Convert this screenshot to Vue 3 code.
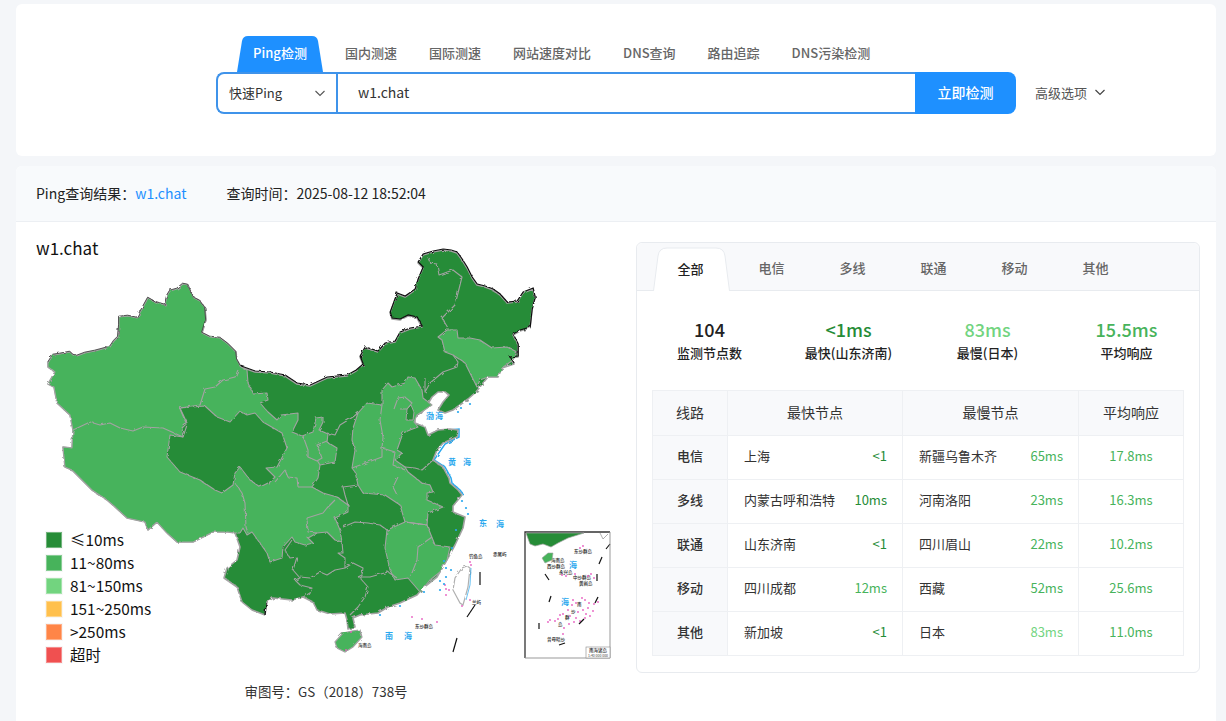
<template>
  <div class="page">
    <section class="search-card">
      <div class="nav-tabs">
        <div class="nav-tab active">
          <svg class="tab-shape" width="86" height="36" viewBox="0 0 86 36">
            <path d="M0 36 L5 5 Q6 0 11 0 H75 Q80 0 81 5 L86 36 Z" fill="#1e90ff" />
          </svg>
          <span>Ping检测</span>
        </div>
        <div v-for="tab in navTabs" :key="tab" class="nav-tab">{{ tab }}</div>
      </div>
      <div class="search-row">
        <div class="search-box">
          <div class="fields">
            <div class="select">
              <span>快速Ping</span>
              <svg width="12" height="12" viewBox="0 0 12 12"><path d="M1.5 4 L6 8.5 L10.5 4" fill="none" stroke="#555" stroke-width="1.1" /></svg>
            </div>
            <div class="host">w1.chat</div>
          </div>
          <button class="go">立即检测</button>
        </div>
        <div class="advanced">
          <span>高级选项</span>
          <svg width="12" height="12" viewBox="0 0 12 12"><path d="M1.5 4 L6 8.5 L10.5 4" fill="none" stroke="#444" stroke-width="1.2" /></svg>
        </div>
      </div>
    </section>

    <section class="result-card">
      <div class="result-head">
        <span>Ping查询结果：<a class="host-link">w1.chat</a></span>
        <span>查询时间：2025-08-12 18:52:04</span>
      </div>
      <div class="result-body">
        <div class="map-side">
          <div class="map-wrap">
            <h3 class="map-title">w1.chat</h3>
            <svg class="map" width="600" height="430" viewBox="36 242 600 430">
              <defs>
                <filter id="rough" x="-2%" y="-2%" width="104%" height="104%">
                  <feTurbulence type="fractalNoise" baseFrequency="0.22" numOctaves="2" seed="4" result="n" />
                  <feDisplacementMap in="SourceGraphic" in2="n" scale="3" />
                </filter>
              </defs>
              <g filter="url(#rough)">
                <!-- 海岸线 -->
                <polyline :points="coast" fill="none" stroke="#2aa8ee" stroke-width="1.5" />
                <polygon :points="outline" fill="#268c37" stroke="#a3a3a3" stroke-width="1.6" stroke-linejoin="round" />
                <polygon v-for="(p, i) in lightAreas" :key="'l' + i" :points="p" fill="#47b35b" stroke="#a3a3a3" stroke-width="1.1" stroke-linejoin="round" />
                <polygon :points="qinghai" fill="#268c37" stroke="#a3a3a3" stroke-width="1.1" stroke-linejoin="round" />
                <polygon :points="tianjin" fill="#268c37" stroke="#a3a3a3" stroke-width="1" />
                <polyline v-for="(p, i) in borders" :key="'b' + i" :points="p" fill="none" stroke="#a3a3a3" stroke-width="1.1" stroke-linejoin="round" />
                <polyline :points="frontierWest" fill="none" stroke="#444" stroke-width="0.9" transform="translate(-0.4 -0.8)" />
                <polyline :points="frontierNorth" fill="none" stroke="#111" stroke-width="1.2" transform="translate(0.2 -1)" />
                <polyline points="266,603 265,615" fill="none" stroke="#111" stroke-width="1.4" />

                <!-- 海南 台湾 -->
                <polygon points="335,642 343,633 352,631 360,630 362,637 353,647 345,652 337,648" fill="#47b35b" stroke="#a3a3a3" stroke-width="1.2" />
                <polygon points="467,566 470,568 468,587 463,605 460,603 453,590 455,578 462,568" fill="#fff" stroke="#b0b0b0" stroke-width="1.2" />
              </g>
              <polyline points="471,568 470,585 466,600" fill="none" stroke="#2aa8ee" stroke-width="0.7" />

              <!-- 海名 岛名 -->
              <text v-for="s in seaLabels" :key="s[0] + s[1]" :x="s[1]" :y="s[2]" class="sea">{{ s[0] }}</text>
              <text v-for="s in isleLabels" :key="s[0] + s[1]" :x="s[1]" :y="s[2]" class="isle">{{ s[0] }}</text>
              <circle v-for="(d, i) in dots" :key="'d' + i" :cx="d[0]" :cy="d[1]" r="0.9" fill="#e85fc0" />
              <circle v-for="(d, i) in blueDots" :key="'c' + i" :cx="d[0]" :cy="d[1]" r="1.1" fill="#2aa8ee" />
              <line v-for="(l, i) in dashes" :key="'n' + i" :x1="l[0]" :y1="l[1]" :x2="l[2]" :y2="l[3]" stroke="#111" stroke-width="1.2" />

              <!-- 南海诸岛小图 -->
              <polyline points="525,658 525,532 610,532" fill="none" stroke="#333" stroke-width="1.3" />
              <polyline points="610,532 610,658 525,658" fill="none" stroke="#999" stroke-width="1" />
              <polygon points="526,533 584,533 568,538 558,543 551,547 543,544 535,546 530,544" fill="#268c37" stroke="#a3a3a3" stroke-width="0.7" />
              <polygon points="542,558 548,553 553,553 552,560 545,563" fill="#47b35b" stroke="#a3a3a3" stroke-width="0.6" />
              <polyline points="600,533 603,539 608,534" fill="none" stroke="#999" stroke-width="0.8" />
              <rect x="586" y="647" width="24" height="11" fill="#fff" stroke="#888" stroke-width="0.6" />
              <text x="589" y="652" class="isle">南海诸岛</text>
              <text x="588" y="657" class="scale">1:40 000 000</text>
            </svg>
            <ul class="legend">
              <li v-for="item in legend" :key="item.text">
                <i :style="{ background: item.color }"></i>{{ item.text }}
              </li>
            </ul>
          </div>
          <p class="map-note">审图号：GS（2018）738号</p>
        </div>

        <div class="panel">
          <div class="panel-tabs">
            <div class="panel-tab active">
              <svg class="tab-shape" width="77" height="44" viewBox="0 0 77 44">
                <path d="M0.5 44 L5 9 Q6 1 14 1 H63 Q71 1 72 9 L76.5 44" fill="#fff" stroke="#e8ebef" />
              </svg>
              <span>全部</span>
            </div>
            <div v-for="tab in lineTabs" :key="tab" class="panel-tab">{{ tab }}</div>
          </div>
          <div class="stats">
            <div v-for="s in stats" :key="s.label" class="stat">
              <b :style="{ color: s.color }">{{ s.value }}</b>
              <span>{{ s.label }}</span>
            </div>
          </div>
          <table>
            <thead>
              <tr>
                <th>线路</th>
                <th>最快节点</th>
                <th>最慢节点</th>
                <th>平均响应</th>
              </tr>
            </thead>
            <tbody>
              <tr v-for="row in rows" :key="row.line">
                <th>{{ row.line }}</th>
                <td>
                  <div class="node"><span>{{ row.fast }}</span><em :style="{ color: row.fastColor }">{{ row.fastMs }}</em></div>
                </td>
                <td>
                  <div class="node"><span>{{ row.slow }}</span><em :style="{ color: row.slowColor }">{{ row.slowMs }}</em></div>
                </td>
                <td class="avg">{{ row.avg }}</td>
              </tr>
            </tbody>
          </table>
        </div>
      </div>
    </section>
  </div>
</template>

<script setup>
const DARK = '#268c37'
const MID = '#47b35b'
const LIGHT = '#72d47f'

const navTabs = ['国内测速', '国际测速', '网站速度对比', 'DNS查询', '路由追踪', 'DNS污染检测']
const lineTabs = ['电信', '多线', '联通', '移动', '其他']

const legend = [
  { text: '≤10ms', color: DARK },
  { text: '11~80ms', color: MID },
  { text: '81~150ms', color: LIGHT },
  { text: '151~250ms', color: '#ffc04d' },
  { text: '>250ms', color: '#ff8547' },
  { text: '超时', color: '#f05050' }
]

const stats = [
  { value: '104', label: '监测节点数', color: '#222' },
  { value: '<1ms', label: '最快(山东济南)', color: DARK },
  { value: '83ms', label: '最慢(日本)', color: LIGHT },
  { value: '15.5ms', label: '平均响应', color: MID }
]

const rows = [
  { line: '电信', fast: '上海', fastMs: '<1', fastColor: DARK, slow: '新疆乌鲁木齐', slowMs: '65ms', slowColor: MID, avg: '17.8ms' },
  { line: '多线', fast: '内蒙古呼和浩特', fastMs: '10ms', fastColor: DARK, slow: '河南洛阳', slowMs: '23ms', slowColor: MID, avg: '16.3ms' },
  { line: '联通', fast: '山东济南', fastMs: '<1', fastColor: DARK, slow: '四川眉山', slowMs: '22ms', slowColor: MID, avg: '10.2ms' },
  { line: '移动', fast: '四川成都', fastMs: '12ms', fastColor: MID, slow: '西藏', slowMs: '52ms', slowColor: MID, avg: '25.6ms' },
  { line: '其他', fast: '新加坡', fastMs: '<1', fastColor: DARK, slow: '日本', slowMs: '83ms', slowColor: LIGHT, avg: '11.0ms' }
]

// 地图坐标直接取截图像素，viewBox 与页面对齐
const frontierWest = '48,363 53,355 60,354 70,352 73,355 77,356 85,353 95,351 110,347 114,341 118,337 119,325 119,317 128,316 137,318 142,309 148,298 155,302 165,305 167,296 170,291 177,289 183,284 188,285 190,290 194,298 200,301 205,308 206,320 202,333 210,337 220,338 228,344 236,352 237,360 241,367'
const frontierNorth = '241,367 255,372 270,373 285,376 297,384 310,386 327,378 347,376 356,371 363,365 360,357 365,348 378,352 385,344 395,342 400,333 410,329 422,327 417,318 408,316 400,320 392,319 390,313 397,294 405,297 415,290 418,280 423,268 418,263 423,255 433,252 443,250 451,251 457,253 462,260 467,268 472,278 477,285 485,287 493,290 500,295 507,303 517,302 523,293 533,289 535,298 532,310 530,328 520,331 513,335 518,345 518,357 510,358 514,364'

const outline = frontierWest + ' ' + frontierNorth + ' 502,368 498,377 488,377 483,383 476,392 468,399 453,410 445,413 438,410 443,402 449,395 445,392 438,392 432,397 426,407 420,415 415,417 415,423 425,427 428,435 438,430 450,429 458,430 457,437 443,443 437,450 433,460 443,467 449,478 450,483 458,490 462,495 453,506 453,512 465,517 463,528 455,545 448,558 437,577 423,588 417,595 400,603 388,607 378,613 360,615 353,618 355,627 348,629 347,620 345,613 330,614 317,610 313,602 303,597 292,600 273,598 267,602 265,615 252,610 242,602 237,587 224,578 227,568 237,560 240,547 235,533 228,532 213,532 203,537 193,542 177,542 167,533 157,522 148,530 145,522 127,518 115,507 107,500 92,490 80,478 72,470 65,467 63,447 72,448 73,430 70,415 57,403 54,387 48,384 55,372 48,367'

const coast = '414,417 414,424 424,428 427,436 438,431 459,429 459,437 445,444 434,460 445,467 451,478 452,483 460,490 464,495'

const lightAreas = [
  // 新疆 西藏 甘肃 四川 重庆
  frontierWest + ' 247,370 248,383 253,394 267,393 268,400 260,403 268,412 277,420 281,415 298,413 298,420 292,432 302,436 313,432 316,418 323,417 323,422 319,430 328,434 327,442 337,448 335,462 320,465 318,478 312,487 323,493 337,497 348,505 348,512 335,518 340,530 342,542 335,540 327,532 317,533 308,538 313,543 305,545 295,542 292,537 283,547 282,558 270,562 267,553 252,532 247,535 243,528 240,533 235,533 228,532 213,532 203,537 193,542 177,542 167,533 157,522 148,530 145,522 127,518 115,507 107,500 92,490 80,478 72,470 65,467 63,447 72,448 73,430 70,415 57,403 54,387 48,384 55,372 48,367',
  // 山西 河北 河南 安徽
  '353,428 358,413 367,403 382,405 382,390 388,383 392,387 405,383 408,377 415,378 422,390 423,398 432,405 417,415 414,422 418,427 410,430 403,433 397,450 402,453 395,460 405,467 408,472 422,483 430,485 433,492 427,493 427,500 443,507 428,513 427,525 405,522 400,505 385,495 363,493 358,485 355,472 352,468 355,450 352,440',
  // 吉林
  '438,337 447,330 457,330 458,338 470,338 480,340 492,348 507,347 517,352 513,360 502,368 498,377 488,377 480,380 477,387 465,363 453,355 445,352 442,340',
  // 江西 福建
  '387,530 405,522 427,525 435,545 450,547 447,560 440,572 430,580 420,592 408,578 395,580 390,570 385,548'
]

const qinghai = '180,408 205,406 217,417 230,422 240,411 247,415 255,413 263,422 282,433 287,448 277,467 266,468 275,477 270,482 260,487 250,480 240,467 235,473 233,485 222,493 215,490 200,480 180,472 167,457 170,435 183,437 182,428 187,423'
const tianjin = '407,409 411,405 414,412 413,420 406,420'

const borders = [
  '428,257 430,263 437,264 439,275 453,270 462,277 457,297 455,305 442,318 448,328',
  '425,378 425,392 430,383 443,372 457,367 458,362 453,355',
  '327,433 335,435 340,425 353,417 358,413',
  '358,485 343,487 345,495 348,505',
  '343,527 355,522 368,523 380,525 387,530',
  '342,542 343,553 338,553 345,558 345,568',
  '292,540 285,550 290,558 297,557 293,570 300,578 295,580',
  '300,577 310,578 320,572 327,575 335,570 345,568 353,563 363,568 362,575 358,577',
  '295,580 300,585 312,588 310,593 303,597',
  '358,577 370,577 388,572 397,578',
  '360,578 368,587 365,597 358,607 350,615',
  '405,467 415,468 422,470 433,460',
  '307,518 308,532 317,533',
  '307,518 323,513 327,508 335,500',
  '235,483 242,493 245,503 246,527 248,533',
  '275,482 285,470 288,477 297,478 298,487 312,487',
  '238,370 235,377 223,380 215,387 205,389 200,405 180,408',
  '180,409 187,425 183,437',
  '73,430 90,422 100,425 110,423 120,428 133,431 143,427 163,428 183,437',
  '303,436 308,450 308,457 317,461 322,458 317,445 327,441',
  '320,465 317,460',
  '382,405 380,420 383,437 382,448 395,452',
  '352,468 382,457 382,448',
  '395,452 393,465 405,470',
  '398,477 393,487 397,495',
  '394,409 398,398 405,397 412,403 407,409 400,409',
  '432,537 418,547 417,560 410,578',
  '405,522 427,525'
]

const seaLabels = [
  ['渤', 426, 419], ['海', 435, 419],
  ['黄', 448, 465], ['海', 463, 465],
  ['东', 479, 526], ['海', 496, 527],
  ['南', 385, 639], ['海', 404, 639],
  ['海', 569, 568],
  ['海', 561, 605]
]

const isleLabels = [
  ['钓鱼岛', 469, 558], ['赤尾屿', 493, 556], ['兰屿', 472, 604],
  ['东沙群岛', 415, 628], ['海南岛', 358, 647],
  ['东沙群岛', 574, 553], ['海南岛', 551, 562], ['西沙群岛', 547, 568],
  ['永兴岛', 559, 574], ['中沙群岛', 573, 579], ['黄岩岛', 579, 585],
  ['南', 577, 606], ['沙', 571, 613], ['群', 565, 619], ['岛', 558, 626],
  ['曾母暗沙', 547, 641]
]

const dots = [
  [412, 617], [422, 619], [437, 622], [470, 562], [471, 565], [470, 600], [462, 606],
  [445, 585], [446, 589], [449, 590], [446, 595], [351, 632], [346, 650],
  [580, 548], [583, 546], [562, 575], [566, 576], [575, 574], [588, 576], [591, 574], [594, 578],
  [573, 600], [576, 603], [582, 598], [585, 600], [589, 603], [572, 605], [568, 610], [570, 616],
  [560, 615], [563, 614], [558, 619], [555, 621], [550, 620], [548, 622], [578, 612], [583, 610],
  [586, 614], [590, 616], [585, 618], [576, 618], [574, 622], [569, 624], [564, 628], [580, 621],
  [594, 604], [598, 602], [588, 608], [593, 611], [563, 634]
]

const blueDots = [
  [446, 577], [440, 590], [444, 584], [451, 570], [446, 568], [444, 561], [462, 501], [466, 508], [468, 514], [458, 412], [461, 408], [470, 404],
  [456, 530], [452, 548], [440, 581], [424, 592], [400, 606], [380, 615]
]

const dashes = [
  [480, 572, 480, 585], [475, 605, 467, 617], [457, 638, 453, 652],
  [610, 544, 606, 549], [602, 557, 599, 564], [597, 574, 597, 581], [598, 597, 595, 603],
  [584, 619, 579, 624], [565, 643, 559, 645], [539, 623, 539, 629], [551, 596, 549, 602], [545, 574, 549, 580]
]
</script>

<style scoped>
.page {
  height: 721px;
  overflow: hidden;
  padding-top: 4px;
  box-sizing: border-box;
  background: #f4f6f9;
  font-family: "Noto Sans CJK SC", "Noto Sans", sans-serif;
  color: #333;
}

.search-card {
  margin: 0 10px 10px 16px;
  height: 152px;
  box-sizing: border-box;
  padding: 32px 0 0 200px;
  background: #fff;
  border-radius: 6px;
}

.nav-tabs {
  display: flex;
  height: 36px;
  padding-left: 21px;
}

.nav-tab {
  position: relative;
  display: flex;
  align-items: center;
  margin-right: 32px;
  padding-bottom: 3px;
  box-sizing: border-box;
  font-size: 13px;
  font-weight: 500;
  color: #666;
}

.nav-tab.active {
  width: 86px;
  justify-content: center;
  margin-right: 22px;
  color: #fff;
}

.nav-tab.active span,
.panel-tab.active span {
  position: relative;
}

.tab-shape {
  position: absolute;
  left: 0;
  top: 0;
}

.search-row {
  display: flex;
  align-items: center;
}

.search-box {
  display: flex;
  width: 800px;
  height: 42px;
}

.fields {
  flex: 1;
  display: flex;
  box-sizing: border-box;
  border: 2px solid #3f93ea;
  border-right: none;
  border-radius: 8px 0 0 8px;
}

.select {
  display: flex;
  align-items: center;
  justify-content: space-between;
  width: 120px;
  box-sizing: border-box;
  padding: 0 10px 2px 11px;
  border-right: 2px solid #3f93ea;
  font-size: 13px;
  color: #333;
}

.select svg {
  margin-top: 2px;
}

.host {
  flex: 1;
  display: flex;
  align-items: center;
  padding: 0 0 2px 20px;
  font-size: 14px;
  color: #333;
}

.go {
  width: 101px;
  padding: 0 0 2px;
  border: none;
  border-radius: 0 8px 8px 0;
  background: #1e90ff;
  color: #fff;
  font: 500 14px "Noto Sans CJK SC", sans-serif;
}

.advanced {
  display: flex;
  align-items: center;
  gap: 7px;
  margin-left: 19px;
  padding-bottom: 2px;
  font-size: 13px;
  color: #555;
}

.result-card {
  margin: 0 10px 0 16px;
  background: #fff;
  border-radius: 6px 6px 0 0;
  height: 560px;
}

.result-head {
  display: flex;
  gap: 40px;
  align-items: center;
  padding: 0 0 1px 20px;
  box-sizing: border-box;
  height: 56px;
  background: #f8fafc;
  border-bottom: 1px solid #eceff3;
  font-size: 14px;
  color: #222;
  border-radius: 6px 6px 0 0;
}

.host-link {
  color: #1e90ff;
}

.result-body {
  display: flex;
  padding: 20px 16px 0 20px;
}

.map-side {
  width: 600px;
  flex: none;
}

.map-wrap {
  position: relative;
  height: 430px;
}

.map {
  display: block;
}

.map-title {
  position: absolute;
  left: 0;
  top: -7px;
  margin: 0;
  font-size: 17px;
  font-weight: 400;
  line-height: 25px;
  color: #111;
}

.sea {
  font-size: 8px;
  font-weight: 700;
  fill: #2aa8ee;
}

.isle {
  font-size: 4.5px;
  font-weight: 500;
  fill: #222;
}

.scale {
  font-size: 3.5px;
  fill: #444;
}

.legend {
  position: absolute;
  left: 10px;
  top: 286px;
  margin: 0;
  padding: 0;
  list-style: none;
  font-size: 15.4px;
  line-height: 23px;
  color: #111;
}

.legend li {
  display: flex;
  align-items: center;
  height: 23px;
}

.legend i {
  width: 14px;
  height: 14px;
  margin-right: 8px;
  border: 1px solid rgba(255, 255, 255, 0.35);
  outline: 1px solid rgba(0, 0, 0, 0.03);
}

.map-note {
  margin: 9px 0 0;
  padding-right: 20px;
  text-align: center;
  font-size: 13.4px;
  line-height: 20px;
  color: #333;
}

.panel {
  width: 564px;
  height: 431px;
  box-sizing: border-box;
  border: 1px solid #e8ebef;
  border-radius: 6px;
}

.panel-tabs {
  display: flex;
  height: 48px;
  box-sizing: border-box;
  padding-left: 13px;
  background: #f8f9fb;
  border-bottom: 1px solid #e8ebef;
  border-radius: 6px 6px 0 0;
}

.panel-tab {
  position: relative;
  width: 81px;
  display: flex;
  align-items: center;
  justify-content: center;
  padding-top: 2px;
  box-sizing: border-box;
  font-size: 13px;
  font-weight: 500;
  color: #666;
}

.panel-tab.active {
  color: #222;
  padding-top: 3px;
}

.panel-tab .tab-shape {
  left: 3px;
  top: 4px;
}

.stats {
  display: grid;
  grid-template-columns: repeat(4, 139px);
  padding: 26px 0 0 3px;
  height: 99px;
  box-sizing: border-box;
  text-align: center;
}

.stat b {
  display: block;
  font-size: 18px;
  font-weight: 500;
  line-height: 24px;
}

.stat span {
  display: block;
  font-size: 13px;
  font-weight: 500;
  line-height: 23px;
  color: #222;
}

table {
  width: 532px;
  margin-left: 15px;
  border-collapse: collapse;
  table-layout: fixed;
  font-size: 13px;
  color: #333;
}

th,
td {
  border: 1px solid #eef0f3;
  height: 44px;
  padding: 0 0 4px;
  font-weight: 500;
  text-align: center;
  box-sizing: border-box;
}

thead th {
  height: 45px;
  padding-bottom: 2px;
  background: #f8f9fb;
  font-size: 14px;
  font-weight: 400;
}

thead th:nth-child(1) {
  width: 75px;
}

thead th:nth-child(2) {
  width: 175px;
}

thead th:nth-child(3) {
  width: 176px;
}

tbody th {
  background: #f8f9fb;
}

tbody td {
  font-weight: 400;
}

.node {
  display: flex;
  justify-content: space-between;
  padding: 0 15px 0 16px;
}

.node em {
  font-style: normal;
}

.avg {
  color: #47b35b;
}
</style>

<style>
html,
body {
  margin: 0;
  overflow: hidden;
}
</style>
